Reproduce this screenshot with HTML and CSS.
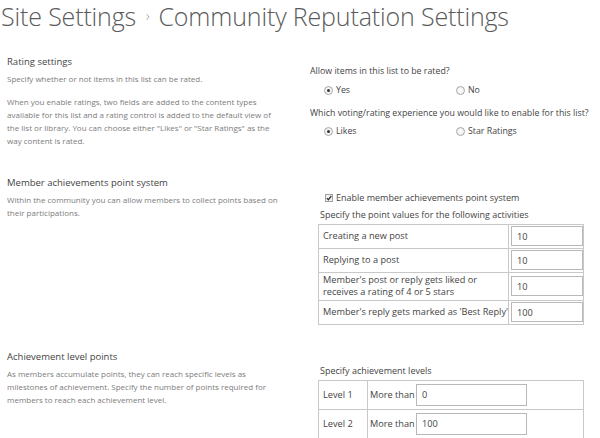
FILE: index.html
```html
<!DOCTYPE html>
<html>
<head>
<meta charset="utf-8">
<link rel="stylesheet" href="styles.css">
</head>
<body>
<div class="page">
  <h1 class="title">Site Settings<span class="sep">›</span>Community Reputation Settings</h1>

  <section class="sec sec-rating">
    <div class="info">
      <h2 class="head">Rating settings</h2>
      <p class="desc">Specify whether or not items in this list can be rated.</p>
      <p class="desc desc-gap">When you enable ratings, two fields are added to the content types available for this list and a rating control is added to the default view of the list or library. You can choose either "Likes" or "Star Ratings" as the way content is rated.</p>
    </div>
    <div class="ctrl ctrl-rating">
      <div class="q">Allow items in this list to be rated?</div>
      <div class="opts opts-first">
        <label class="opt"><span class="radio on"></span>Yes</label>
        <label class="opt"><span class="radio"></span>No</label>
      </div>
      <div class="q q-second">Which voting/rating experience you would like to enable for this list?</div>
      <div class="opts opts-second">
        <label class="opt"><span class="radio on"></span>Likes</label>
        <label class="opt"><span class="radio"></span>Star Ratings</label>
      </div>
    </div>
  </section>

  <section class="sec sec-points">
    <div class="info">
      <h2 class="head">Member achievements point system</h2>
      <p class="desc">Within the community you can allow members to collect points based on their participations.</p>
    </div>
    <div class="ctrl ctrl-points">
      <label class="check-row">
        <svg class="check" width="8" height="8" viewBox="0 0 8 8"><rect x="0.5" y="0.5" width="7" height="7" fill="#f4f4f4" stroke="#a0a0a0"/><path d="M1.8 4.1 L3.4 5.7 L6.3 2" fill="none" stroke="#333" stroke-width="1.3"/></svg>
        Enable member achievements point system
      </label>
      <div class="sub">Specify the point values for the following activities</div>
      <table class="grid grid-points">
        <tr class="r24"><td class="lbl">Creating a new post</td><td class="val"><span class="box">10</span></td></tr>
        <tr class="r24"><td class="lbl">Replying to a post</td><td class="val"><span class="box">10</span></td></tr>
        <tr class="r28"><td class="lbl">Member's post or reply gets liked or<br>receives a rating of 4 or 5 stars</td><td class="val"><span class="box">10</span></td></tr>
        <tr class="r24"><td class="lbl">Member's reply gets marked as 'Best Reply'</td><td class="val"><span class="box">100</span></td></tr>
      </table>
    </div>
  </section>

  <section class="sec sec-levels">
    <div class="info">
      <h2 class="head">Achievement level points</h2>
      <p class="desc">As members accumulate points, they can reach specific levels as milestones of achievement. Specify the number of points required for members to reach each achievement level.</p>
    </div>
    <div class="ctrl ctrl-levels">
      <div class="sub">Specify achievement levels</div>
      <table class="grid grid-levels">
        <tr><td class="lvl">Level 1</td><td class="more"><span class="mt">More than</span><span class="box wide">0</span></td></tr>
        <tr><td class="lvl">Level 2</td><td class="more"><span class="mt">More than</span><span class="box wide">100</span></td></tr>
      </table>
    </div>
  </section>
</div>
</body>
</html>
```

FILE: styles.css
```css
html, body {
  margin: 0;
  padding: 0;
  background: #ffffff;
}

body {
  font-family: "Open Sans", "Liberation Sans", sans-serif;
  color: #444444;
  width: 600px;
  height: 438px;
  overflow: hidden;
}

.title {
  margin: 0;
  padding-left: 1px;
  font-weight: 300;
  font-size: 25px;
  line-height: 32px;
  height: 32px;
  color: #5a5a5a;
  white-space: nowrap;
  letter-spacing: -0.15px;
}

.sep {
  display: inline-block;
  font-size: 14px;
  line-height: 14px;
  color: #9a9a9a;
  vertical-align: 5px;
  margin: 0 9px 0 10px;
}

.sec {
  display: grid;
  grid-template-columns: 303px 1fr;
  padding-left: 7px;
}

.sec-rating {
  margin-top: 24px;
  height: 121px;
}

.sec-points {
  height: 174px;
}

.head {
  margin: 0;
  font-weight: 400;
  font-size: 9.5px;
  line-height: 12px;
  color: #444444;
}

.desc {
  margin: 3.5px 0 0;
  font-size: 8px;
  line-height: 13px;
  color: #7c7c7c;
  width: 277px;
}

.desc-gap {
  margin-top: 10px;
}

.ctrl {
  font-size: 8.8px;
  color: #444444;
}

.ctrl-rating {
  padding-top: 8.5px;
}

.q {
  line-height: 13px;
  white-space: nowrap;
}

.q-second {
  margin-top: 9.5px;
}

.opts {
  display: flex;
  padding-left: 14px;
  line-height: 13px;
}

.opts-first {
  margin-top: 6.5px;
}

.opts-second {
  margin-top: 5px;
}

.opt {
  display: flex;
  align-items: center;
  width: 132px;
}

.radio {
  width: 7px;
  height: 7px;
  border: 1px solid #a8a8a8;
  border-radius: 50%;
  background: radial-gradient(circle, #ffffff 0%, #e9e9e9 100%);
  margin-right: 3px;
  display: inline-flex;
  align-items: center;
  justify-content: center;
}

.radio.on::after {
  content: "";
  width: 3px;
  height: 3px;
  border-radius: 50%;
  background: #333333;
}

.ctrl-points {
  padding-top: 14px;
}

.check-row {
  display: flex;
  align-items: center;
  padding-left: 15px;
  font-size: 9px;
  line-height: 14px;
  color: #444444;
}

.check {
  margin-right: 3px;
}

.sub {
  margin: 2.5px 0 0 10px;
  font-size: 9px;
  line-height: 13px;
  color: #444444;
}

.grid {
  margin: 3px 0 0 8px;
  border-collapse: collapse;
  width: 266px;
  font-size: 9.2px;
  color: #444444;
}

.grid td {
  border: 1px solid #c8c8c8;
  padding: 0;
  vertical-align: middle;
}

.r24 { height: 24px; }
.r28 { height: 28px; }

.lbl {
  width: 184px;
  padding-left: 4px !important;
  line-height: 12px;
  white-space: nowrap;
}

.val {
  padding-left: 2px !important;
}

.box {
  display: flex;
  align-items: center;
  box-sizing: border-box;
  width: 72px;
  height: 20px;
  border: 1px solid #b8b8b8;
  padding-left: 5px;
  background: #ffffff;
  color: #444444;
}

.ctrl-levels {
  padding-top: 10.5px;
}

.grid-levels {
  margin-top: 2.5px;
}

.grid-levels tr {
  height: 29px;
}

.lvl {
  width: 44px;
  padding-left: 4px !important;
}

.more {
  padding-left: 2px !important;
}

.more .mt {
  display: inline-block;
  width: 46px;
  vertical-align: middle;
}

.box.wide {
  display: inline-flex;
  vertical-align: middle;
  width: 111px;
  height: 22px;
}
```
